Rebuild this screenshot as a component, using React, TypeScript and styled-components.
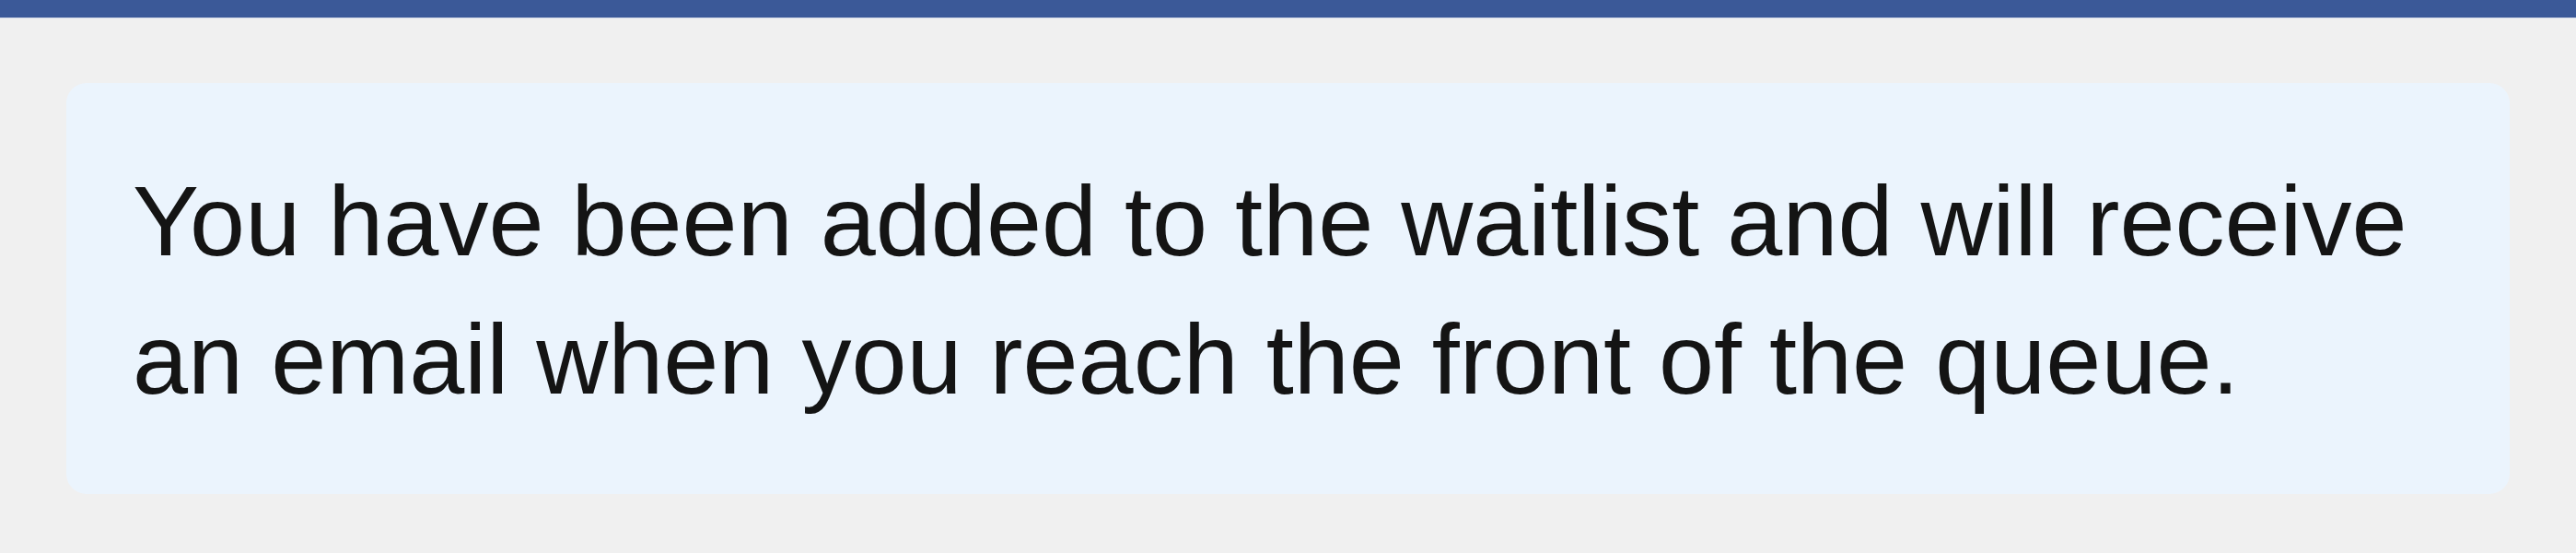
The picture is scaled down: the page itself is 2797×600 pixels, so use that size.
import styled, { createGlobalStyle } from "styled-components";

const GlobalStyle = createGlobalStyle`
  html, body {
    margin: 0;
    padding: 0;
    background: #f0f0f0;
  }
  body {
    font-family: "Liberation Sans", Arial, Helvetica, sans-serif;
  }
`;

const Page = styled.div`
  width: 100%;
  min-height: 600px;
  background: #f0f0f0;
`;

const TopBar = styled.div`
  height: 19px;
  background: #3b5998;
  border-bottom: 1px solid #d4dbe9;
`;

const Body = styled.div`
  padding: 70px 72px 0;
`;

const Notice = styled.div`
  background: #ebf4fd;
  border-radius: 22px;
  padding: 75px 72px 71px;
`;

const Message = styled.p`
  margin: 0;
  font-size: 108px;
  line-height: 150px;
  color: #141414;
`;

export default function App() {
  return (
    <Page>
      <GlobalStyle />
      <TopBar />
      <Body>
        <Notice>
          <Message>
            You have been added to the waitlist and will receive an email when
            you reach the front of the queue.
          </Message>
        </Notice>
      </Body>
    </Page>
  );
}
